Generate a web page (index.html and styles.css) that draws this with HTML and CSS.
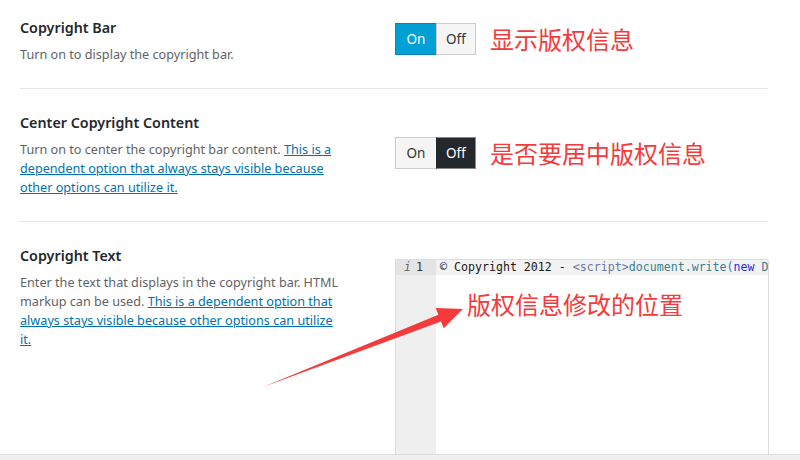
FILE: index.html
```html
<!DOCTYPE html>
<html lang="en">
<head>
<meta charset="utf-8">
<title>Copyright options</title>
<link rel="stylesheet" href="styles.css">
</head>
<body>
<div class="page">
  <main class="options">
    <section class="option option--first">
      <div class="option__info">
        <h3 class="option__title">Copyright Bar</h3>
        <p class="option__desc">Turn on to display the copyright bar.</p>
      </div>
      <div class="option__control">
        <div class="toggle">
          <span class="toggle__btn toggle__btn--on is-active">On</span>
          <span class="toggle__btn toggle__btn--off">Off</span>
        </div>
        <span class="note">显示版权信息</span>
      </div>
    </section>

    <section class="option">
      <div class="option__info">
        <h3 class="option__title">Center Copyright Content</h3>
        <p class="option__desc">Turn on to center the copyright bar content. <a href="#">This is a dependent option that always stays visible because other options can utilize it.</a></p>
      </div>
      <div class="option__control">
        <div class="toggle">
          <span class="toggle__btn toggle__btn--on">On</span>
          <span class="toggle__btn toggle__btn--off is-active">Off</span>
        </div>
        <span class="note">是否要居中版权信息</span>
      </div>
    </section>

    <section class="option option--last">
      <div class="option__info">
        <h3 class="option__title">Copyright Text</h3>
        <p class="option__desc">Enter the text that displays in the copyright bar. HTML markup can be used. <a href="#">This is a dependent option that always stays visible because other options can utilize it.</a></p>
      </div>
      <div class="option__control option__control--top">
        <div class="editor">
          <div class="editor__gutter">
            <div class="editor__gutter-cell is-active"><span class="editor__info">i</span><span>1</span></div>
          </div>
          <div class="editor__content">
            <div class="editor__line is-active">© Copyright 2012 - <span class="tk-tag">&lt;script&gt;</span><span class="tk-id">document.write(</span><span class="tk-kw">new</span><span class="tk-id"> D</span></div>
          </div>
        </div>
      </div>
    </section>
  </main>
  <div class="hscroll"></div>
</div>

<div class="annot">版权信息修改的位置</div>
<svg class="arrow" width="800" height="460" viewBox="0 0 800 460" aria-hidden="true">
  <polygon points="263,387 438.4,314.8 435.7,307.9 463,309 443.7,328.3 441,321.4" fill="#f43a3a"/>
</svg>
</body>
</html>
```

FILE: styles.css
```css
* { box-sizing: border-box; }

html, body {
  margin: 0;
  padding: 0;
  background: #fff;
}

body {
  font-family: "Noto Sans", "Liberation Sans", sans-serif;
  color: #23282d;
  position: relative;
  width: 800px;
  height: 460px;
  overflow: hidden;
}

.page {
  height: 460px;
  display: flex;
  flex-direction: column;
}

.options {
  flex: 1;
  overflow: hidden;
  padding: 0 32px 0 20px;
}

.option {
  display: grid;
  grid-template-columns: 375px 1fr;
  padding: 24px 0 24px;
  border-bottom: 1px solid #e5e5e5;
}

.option--first { padding-top: 18px; }

.option--last { border-bottom: none; }

.option__title {
  margin: 0;
  font-size: 14.3px;
  line-height: 20px;
  font-weight: 600;
  color: #23282d;
}

.option__desc {
  margin: 7px 0 0;
  width: 322px;
  font-size: 12.65px;
  line-height: 19px;
  color: #5f6368;
}

.option__desc a {
  color: #0073aa;
  text-decoration: underline;
}

.option__control {
  display: flex;
  align-items: center;
  gap: 14px;
  align-self: center;
  margin-bottom: 4px;
}

.option__control--top {
  align-self: start;
  margin: 13px 0 0;
}

.toggle {
  display: flex;
  height: 32px;
}

.toggle__btn {
  display: flex;
  align-items: center;
  justify-content: center;
  font-size: 13.5px;
  border: 1px solid #ccc;
  background: #f5f5f5;
  color: #333;
}

.toggle__btn--on { border-right: none; width: 41px; }
.toggle__btn--off { width: 40px; }

.toggle__btn--on.is-active {
  background: #009fd4;
  border-color: #0089ba;
  color: #fff;
}

.toggle__btn--off.is-active {
  background: #23282d;
  border-color: #888;
  border-left-color: #23282d;
  color: #fff;
}

.note {
  font-family: "Noto Sans CJK SC", sans-serif;
  font-size: 24px;
  line-height: 1;
  color: #f43a3a;
}

.editor {
  width: 374px;
  height: 260px;
  display: flex;
  border: 1px solid #ddd;
  border-top-right-radius: 3px;
  font-family: "DejaVu Sans Mono", "Liberation Mono", monospace;
  font-size: 11.62px;
  line-height: 15px;
  overflow: hidden;
}

.editor__gutter {
  width: 40px;
  flex: none;
  background: #efefef;
  color: #333;
}

.editor__gutter-cell {
  height: 15px;
  display: flex;
  justify-content: flex-end;
  gap: 5px;
  padding-right: 13px;
}

.editor__gutter-cell.is-active { background: #e4e4e4; }

.editor__info {
  font-style: italic;
  color: #666;
}

.editor__content {
  flex: 1;
  min-width: 0;
  overflow: hidden;
}

.editor__line {
  height: 15px;
  padding-left: 4px;
  white-space: pre;
  color: #1a1a1a;
}

.editor__line.is-active { background: #f2f2f2; }

.tk-tag { color: #6a78a8; }
.tk-id { color: #3c7e8e; }
.tk-kw { color: #2a2ad4; }

.hscroll {
  flex: none;
  height: 6px;
  border-top: 1px solid #ddd;
  background: #f0f0f0;
}

.annot {
  position: absolute;
  left: 467px;
  top: 292px;
  font-family: "Noto Sans CJK SC", sans-serif;
  font-size: 24px;
  line-height: 1;
  color: #f43a3a;
  white-space: nowrap;
}

.arrow {
  position: absolute;
  left: 0;
  top: 0;
  pointer-events: none;
}
```
